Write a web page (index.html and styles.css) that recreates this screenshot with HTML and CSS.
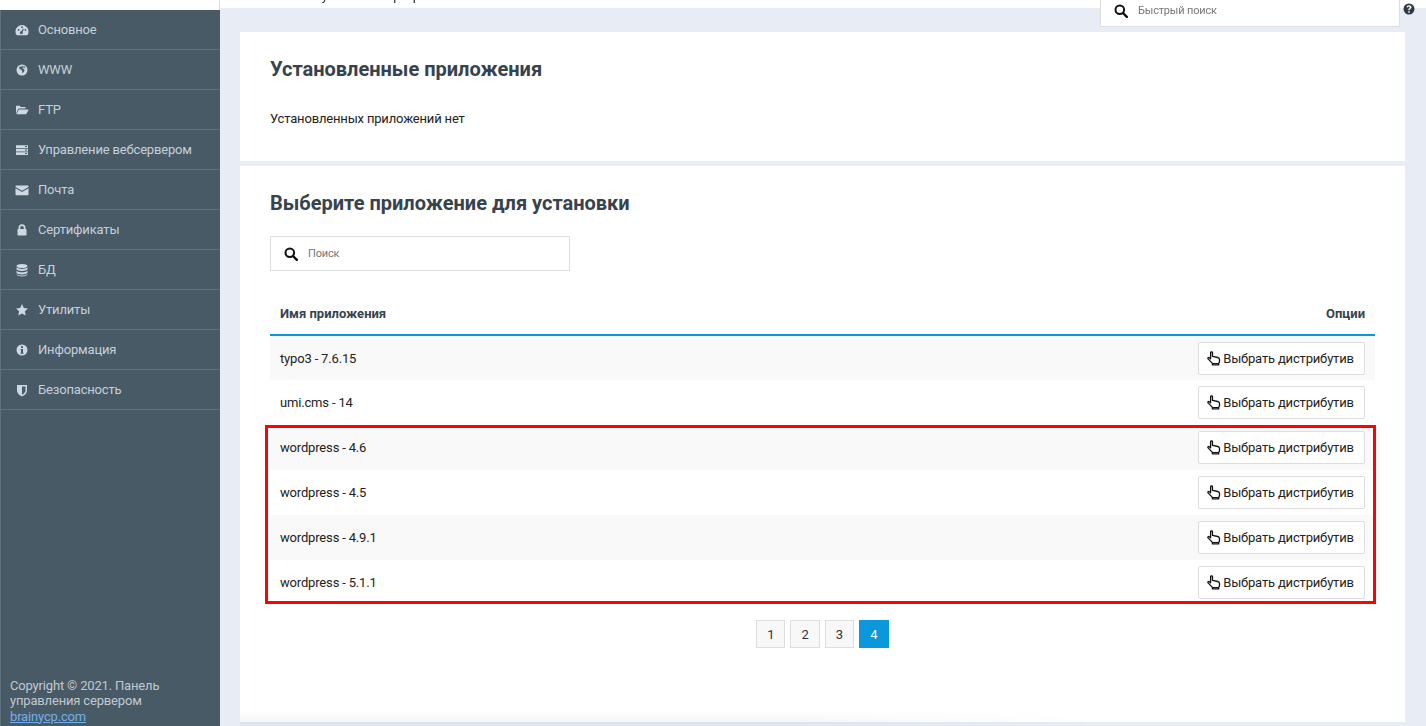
FILE: index.html
```html
<!DOCTYPE html>
<html lang="ru">
<head>
<meta charset="utf-8">
<title>Приложения</title>
<link rel="stylesheet" href="styles.css">
</head>
<body>
<svg class="defs" width="0" height="0" aria-hidden="true">
  <symbol id="i-search" viewBox="0 0 14 14"><circle cx="5.800" cy="5.800" r="4.300" fill="none" stroke="currentColor" stroke-width="2"/><path d="M9 9l3.800 3.800" stroke="currentColor" stroke-width="2.400" stroke-linecap="round"/></symbol>
  <symbol id="i-hand" viewBox="0 0 14 15"><path d="M3.600 1.700c0-1 1.900-1 1.900 0v3.600l5.300 1.200c1 .2 1.700 1 1.700 2v2.100c0 .7-.3 1.300-.8 1.700v1.600H5.400v-1.500L1.100 7.900c-.7-.8.400-1.800 1.200-1.100l1.300 1z" fill="#fff" stroke="#111" stroke-width="1.300" stroke-linejoin="round"/><path d="M5.400 12.500h6.300" stroke="#111" stroke-width="1"/></symbol>
</svg>
<div class="app">
  <aside class="sidebar">
    <div class="logo-strip"></div>
    <nav class="menu">
      <a class="menu-item"><svg class="menu-icon" viewBox="0 0 14 14"><path fill-rule="evenodd" d="M7 2a6.600 6.600 0 0 1 5.700 9.800c-.2.3-.5.500-.8.500H2.100c-.3 0-.6-.2-.8-.5A6.600 6.600 0 0 1 7 2zM7 3.300a.9.900 0 1 0 0 1.800.9.900 0 0 0 0-1.800zM3.600 6a.9.900 0 1 0 0 1.800.9.900 0 0 0 0-1.800zM10.400 6a.9.900 0 1 0 0 1.800.9.900 0 0 0 0-1.800zM8 5.600 6.400 8.300a1.400 1.400 0 1 0 1.200.7L8.800 6z"/></svg>Основное</a>
      <a class="menu-item"><svg class="menu-icon" viewBox="0 0 14 14"><path fill-rule="evenodd" d="M7 1.500a5.500 5.500 0 1 1 0 11 5.500 5.500 0 0 1 0-11zM8 3.200 6.300 3.600 5 3.500 4 4.800l.9 1.500 1.700.5.500 1.500.4 2 1.300-1.400.8-1.900-1.300-1.400-1-.4.600-1 1.700.5.900.6-.6-1.900z"/></svg>WWW</a>
      <a class="menu-item"><svg class="menu-icon" viewBox="0 0 14 14"><path d="M1 11V3.300c0-.3.200-.5.500-.5h3.300l1 1.200h4.200c.3 0 .5.200.5.500v1H4c-.4 0-.7.200-.9.500z"/><path d="M3.700 6.500h9.500c.3 0 .5.300.3.600l-2 3.700c-.2.200-.4.400-.7.400H1.500z"/></svg>FTP</a>
      <a class="menu-item"><svg class="menu-icon" viewBox="0 0 14 14"><path fill-rule="evenodd" d="M1 2.200h12v2.800H1zm0 3.500h12v2.800H1zm0 3.500h12V12H1zM10 3.100v1h2v-1zm0 3.500v1h2v-1zm0 3.500v1h2v-1z"/></svg>Управление вебсервером</a>
      <a class="menu-item"><svg class="menu-icon" viewBox="0 0 14 14"><path d="M1.300 2.400h11.400c.4 0 .8.300.8.700v.8L7 7.800.5 3.900v-.8c0-.4.400-.7.800-.7z"/><path d="M.5 5.200 7 9.100l6.500-3.900v6.300c0 .4-.4.700-.8.700H1.300c-.4 0-.8-.3-.8-.7z"/></svg>Почта</a>
      <a class="menu-item"><svg class="menu-icon" viewBox="0 0 14 14"><path fill-rule="evenodd" d="M3.500 6V4.700a3.500 3.500 0 0 1 7 0V6h.3c.4 0 .7.300.7.700v5c0 .4-.3.700-.7.700H3.200c-.4 0-.7-.3-.7-.7v-5c0-.4.300-.7.700-.7zm1.700 0h3.600V4.700a1.800 1.800 0 0 0-3.600 0z"/></svg>Сертификаты</a>
      <a class="menu-item"><svg class="menu-icon" viewBox="0 0 14 14"><ellipse cx="7" cy="3" rx="5.500" ry="2"/><path d="M1.500 4.300C2.500 5.500 4.800 6 7 6s4.500-.5 5.500-1.700v2C12 7.500 9.500 8 7 8s-5-.5-5.500-1.700z"/><path d="M1.500 7.700C2.500 8.800 4.800 9.300 7 9.300s4.500-.5 5.500-1.600v2C12 10.900 9.500 11.400 7 11.400s-5-.5-5.500-1.700z"/><path d="M1.500 10.900c1 1.100 3.300 1.500 5.500 1.500s4.500-.4 5.500-1.500v.6C12 12.800 9.500 13.400 7 13.400s-5-.6-5.500-1.900z"/></svg>БД</a>
      <a class="menu-item"><svg class="menu-icon" viewBox="0 0 14 14"><path d="M7 1l1.800 3.900 4.200.5-3.100 2.900.8 4.200L7 10.400l-3.700 2.100.8-4.200L1 5.400l4.200-.5z"/></svg>Утилиты</a>
      <a class="menu-item"><svg class="menu-icon" viewBox="0 0 14 14"><path fill-rule="evenodd" d="M7 1.500a5.500 5.500 0 1 1 0 11 5.500 5.500 0 0 1 0-11zM6 3.300v1.700h2V3.300zM5.500 6v1H6v2.700h-.5v1h3v-1H8V6z"/></svg>Информация</a>
      <a class="menu-item"><svg class="menu-icon" viewBox="0 0 14 14"><path fill-rule="evenodd" d="M2 2h10v5.500c0 3-2.800 5-5 6-2.200-1-5-3-5-6zM7 3.500v8.300c1.500-.8 3.500-2.300 3.500-4.300v-4z"/></svg>Безопасность</a>
    </nav>
    <footer class="copyright">Copyright © 2021. Панель управления сервером <a class="copyright-link">brainycp.com</a></footer>
  </aside>
  <main class="main">
    <div class="topbar"><span class="crumbs">Главная - установка программ</span></div>
    <div class="quick-search"><svg class="search-icon"><use href="#i-search"/></svg><span class="placeholder">Быстрый поиск</span></div>
    <svg class="help-icon" viewBox="0 0 14 14"><path fill-rule="evenodd" d="M7 1.500a5.500 5.500 0 1 1 0 11 5.500 5.500 0 0 1 0-11zM7 3.200c-1.400 0-2.300.7-2.500 1.900l1.400.4c.2-.6.500-.9 1-.9s.9.300.9.700c0 .4-.3.600-.7.900-.6.400-.9.800-.9 1.500v.5h1.600v-.3c0-.3.200-.5.600-.8.600-.4 1.100-.9 1.100-1.800 0-1.300-1.100-2.100-2.500-2.100zM6.200 9.300v1.500h1.600V9.300z"/></svg>
    <div class="content">
      <section class="card card-installed">
        <h2 class="card-title">Установленные приложения</h2>
        <p class="empty">Установленных приложений нет</p>
      </section>
      <section class="card card-select">
        <h2 class="card-title">Выберите приложение для установки</h2>
        <div class="search"><svg class="search-icon"><use href="#i-search"/></svg><span class="placeholder">Поиск</span></div>
        <div class="table-wrap">
          <table class="apps">
            <thead><tr><th>Имя приложения</th><th class="col-opt">Опции</th></tr></thead>
            <tbody>
              <tr><td>typo3 - 7.6.15</td><td class="col-opt"><button class="btn"><svg class="hand"><use href="#i-hand"/></svg>Выбрать дистрибутив</button></td></tr>
              <tr><td>umi.cms - 14</td><td class="col-opt"><button class="btn"><svg class="hand"><use href="#i-hand"/></svg>Выбрать дистрибутив</button></td></tr>
              <tr><td>wordpress - 4.6</td><td class="col-opt"><button class="btn"><svg class="hand"><use href="#i-hand"/></svg>Выбрать дистрибутив</button></td></tr>
              <tr><td>wordpress - 4.5</td><td class="col-opt"><button class="btn"><svg class="hand"><use href="#i-hand"/></svg>Выбрать дистрибутив</button></td></tr>
              <tr><td>wordpress - 4.9.1</td><td class="col-opt"><button class="btn"><svg class="hand"><use href="#i-hand"/></svg>Выбрать дистрибутив</button></td></tr>
              <tr><td>wordpress - 5.1.1</td><td class="col-opt"><button class="btn"><svg class="hand"><use href="#i-hand"/></svg>Выбрать дистрибутив</button></td></tr>
            </tbody>
          </table>
          <div class="highlight"></div>
        </div>
        <div class="pager">
          <a class="page">1</a><a class="page">2</a><a class="page">3</a><a class="page page-active">4</a>
        </div>
      </section>
    </div>
  </main>
</div>
</body>
</html>
```

FILE: styles.css
```css
* { box-sizing: border-box; }
html, body { margin: 0; height: 100%; overflow: hidden; }
body { font-family: Roboto, "Liberation Sans", sans-serif; font-size: 13px; letter-spacing: -0.17px; color: #222; background: #e8ecf5; }
.defs { position: absolute; }
.app { display: flex; height: 726px; opacity: 0.999; }

.sidebar { width: 220px; flex: none; display: flex; flex-direction: column; background: #495a67; border-left: 1px solid #5f7080; }
.logo-strip { height: 10px; margin-left: -1px; background: #fff; border-right: 1px solid #ddd; flex: none; }
.menu { display: flex; flex-direction: column; }
.menu-item { height: 40px; display: flex; align-items: center; padding-left: 14px; gap: 9px; color: #c5d0d9; font-size: 13px; border-bottom: 1px solid #5f7080; }
.menu-icon { width: 14px; height: 14px; flex: none; fill: #cdd8e2; }
.copyright { margin-top: auto; padding: 0 9px 2px; font-size: 13px; line-height: 15.500px; color: #c0c8cf; }
.copyright-link { color: #6fb0ea; text-decoration: underline; display: block; }

.main { flex: 1; position: relative; min-width: 0; }
.topbar { height: 8px; background: #fff; overflow: hidden; }
.crumbs { display: block; margin-top: -12px; margin-left: 44px; font-size: 13px; line-height: 16px; color: #222; }
.quick-search { position: absolute; left: 880px; top: -6px; width: 300px; height: 33px; display: flex; align-items: center; padding-left: 13px; gap: 10px; background: #fff; border: 1px solid #ddd; }
.help-icon { position: absolute; left: 1182px; top: 2px; width: 14px; height: 14px; fill: #2f3a45; }
.search-icon { width: 14px; height: 14px; color: #111; flex: none; }
.placeholder { font-size: 11px; color: #777; }

.content { padding: 24px 21px 0 20px; display: flex; flex-direction: column; gap: 5px; }
.card { background: #fff; padding: 0 30px; }
.card-installed { height: 129px; padding-top: 25px; }
.card-select { position: relative; height: 556px; padding-top: 25px; }
.card-select::after { content: ""; position: absolute; left: 0; bottom: -4px; width: 850px; height: 16px; background: linear-gradient(to bottom, rgba(0,0,0,0) 0, rgba(0,0,0,0.035) 12px, #dde3ec 12px, #e3e8f1 16px); -webkit-mask-image: linear-gradient(to right, #000 65%, transparent 100%); mask-image: linear-gradient(to right, #000 65%, transparent 100%); pointer-events: none; }
.card-title { margin: 0; font-size: 20px; line-height: 24px; font-weight: 700; letter-spacing: 0; color: #36424e; }
.empty { margin: 30px 0 0; line-height: 16px; color: #222; }

.search { margin-top: 21px; width: 300px; height: 35px; display: flex; align-items: center; padding-left: 13px; gap: 10px; border: 1px solid #ddd; background: #fff; }

.table-wrap { position: relative; margin-top: 24px; }
.apps { width: 100%; border-collapse: collapse; table-layout: fixed; }
.apps th { height: 40px; padding: 0 10px 2px; text-align: left; font-size: 13px; font-weight: 700; letter-spacing: 0; color: #36424e; border-bottom: 2px solid #0b97dc; }
.apps td { height: 45px; padding: 0 10px; font-size: 13px; color: #222; }
.apps tbody tr:nth-child(odd) { background: #f9f9f9; }
.apps .col-opt { text-align: right; }
.btn { display: inline-flex; align-items: center; justify-content: center; gap: 2px; width: 167px; height: 33px; vertical-align: middle; padding: 0 2px 0 0; font: 13px Roboto, "Liberation Sans", sans-serif; letter-spacing: -0.17px; color: #222; background: #fff; border: 1px solid #ddd; border-radius: 2px; }
.hand { width: 14px; height: 15px; flex: none; }
.highlight { position: absolute; left: -5px; right: -1px; top: 130px; height: 179px; border: 3px solid #f00; pointer-events: none; }

.pager { margin-top: 15px; display: flex; justify-content: center; gap: 5px; }
.page { width: 29.300px; height: 28px; display: flex; align-items: center; justify-content: center; font-size: 13px; color: #333; background: #f8f8f8; border: 1px solid #ddd; }
.page-active { width: 30px; color: #fff; background: #0b97dc; border-color: #0b97dc; }
```
